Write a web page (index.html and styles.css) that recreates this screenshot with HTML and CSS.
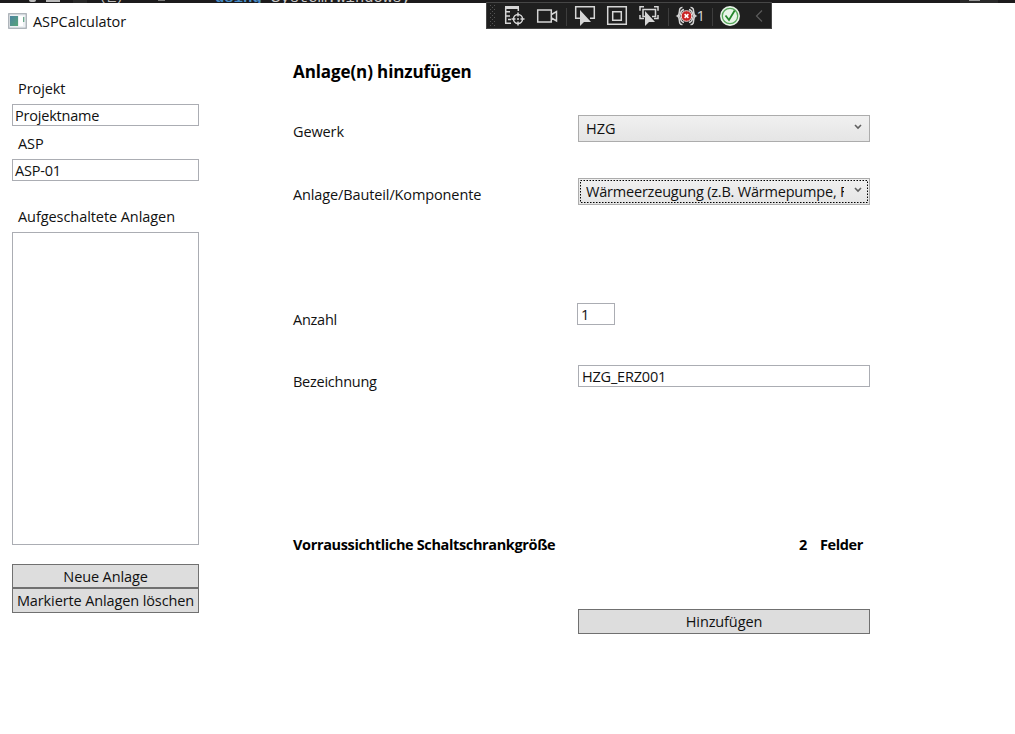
FILE: index.html
```html
<!DOCTYPE html>
<html lang="de">
<head>
<meta charset="utf-8">
<title>ASPCalculator</title>
<link rel="stylesheet" href="styles.css">
</head>
<body>
<div class="editor-strip">
  <i class="strip-dot"></i><i class="strip-bar"></i><i class="strip-sep"></i>
  <span class="strip-tab">(면)</span><i class="strip-caret"></i>
  <span class="code"><b class="keyword">using</b> System.Windows;</span>
  <i class="strip-panel"></i>
</div>
<header class="titlebar">
  <svg class="app-icon" width="19" height="16" viewBox="0 0 19 16">
    <defs><linearGradient id="pane" x2="1" y2="1"><stop offset="0" stop-color="#4b83a1"/><stop offset="1" stop-color="#58a578"/></linearGradient></defs>
    <rect x=".75" y=".75" width="17.5" height="14.5" fill="#eef1f4" stroke="#a2a9b0" stroke-width="1.2"/>
    <rect x="2" y="3" width="8" height="10" fill="url(#pane)"/>
    <rect x="11" y="3" width="4" height="10" fill="#fff"/>
    <path d="M15.7 4v5" stroke="#5ba080" stroke-width="1.2"/>
  </svg>
  <span class="title">ASPCalculator</span>
</header>
<div class="debug-toolbar">
  <svg width="286" height="27" viewBox="0 0 286 27" fill="none" stroke="#d6d6d6" stroke-width="1.5">
    <rect x=".5" y=".5" width="285" height="26" fill="#1f1f1f" stroke="#464646" stroke-width="1"/>
    <g stroke="#555" stroke-width="1" stroke-dasharray="1 3"><path d="M4.5 3v21M8.5 3v21"/><path d="M6.5 5v19"/></g>
    <path d="M19 5.500h14" stroke-width="3"/>
    <path d="M19.700 6v15.300M32.300 6v3M19 9.700h5M20 14h4M19 21.300h6M22 17.500h3"/>
    <circle cx="32" cy="17" r="4.500"/><path d="M32 10.500v4M32 19.500v4M25.500 17h4M34.500 17h4"/>
    <circle cx="32" cy="17" r="1" fill="#d6d6d6" stroke="none"/>
    <path d="M51.700 8h13.600v12H51.700zM65.500 12.500l5-3v9.500l-5-3"/>
    <path d="M80.500 6v18M182.500 6v18M226.500 6v18" stroke="#3d3d3d" stroke-width="1"/>
    <path d="M94 16.300h-4.300V4.700h18.600v11.600H104"/>
    <path d="M94 8v16l4-4 2.500 0h4.500z" fill="#d6d6d6" stroke="none"/>
    <path d="M121.700 4.700h18.600v17.600h-18.600zM126.700 9.700h8.600v8.600h-8.600z"/>
    <path d="M158 4.700h-4v4M154 13v3.500h4M168 4.700h4v4M172 13v3.500h-4M159 14.500h-2V7.500h12.500v7H166"/>
    <path d="M159 9v15l4-4h6z" fill="#d6d6d6" stroke="none"/>
    <path d="M196.500 5.500c-5-.5-1.500 7-5 8.500 3.500 1.500 0 9 5 8.500M204.500 5.500c5-.5 1.500 7 5 8.500-3.500 1.500 0 9-5 8.500" stroke-width="1.500"/>
    <path d="M198 7.500c-4 1-3 4-4.500 6.500 1.500 2.500.5 5.500 4.500 6.500M203 7.500c4 1 3 4 4.500 6.500-1.500 2.500-.5 5.500-4.500 6.500" stroke-width="1.400"/>
    <circle cx="200.500" cy="14" r="5.300" fill="#c92323" stroke="#f2dada" stroke-width="1"/>
    <path d="M198.600 12.100l3.800 3.800m0-3.800l-3.800 3.800" stroke="#fff" stroke-width="1.500"/>
    <circle cx="244" cy="14" r="9.200" fill="#e8f5e8" stroke="#e8f5e8"/>
    <circle cx="244" cy="14" r="7.700" stroke="#58a85c" stroke-width="1.300" fill="#e8f5e8"/>
    <path d="M239.500 13.500l3.500 4.500 5.700-9.500" stroke="#24852c" stroke-width="1.800"/>
    <path d="M276 8.500l-5.500 5.500 5.500 5.500" stroke="#5c5c5c" stroke-width="1.200"/>
    <text class="error-count" x="210.500" y="19">1</text>
  </svg>
</div>
<div class="workspace">
  <aside class="sidebar">
    <label class="caption">Projekt</label>
    <div class="textbox">Projektname</div>
    <label class="caption caption-asp">ASP</label>
    <div class="textbox">ASP-01</div>
    <label class="caption caption-list">Aufgeschaltete Anlagen</label>
    <div class="listbox"></div>
    <div class="button">Neue Anlage</div>
    <div class="button button-delete">Markierte Anlagen löschen</div>
  </aside>
  <main class="form">
    <h1>Anlage(n) hinzufügen</h1>
    <div class="row row-gewerk"><label>Gewerk</label>
      <div class="select"><span class="value value-short">HZG</span><svg class="chevron" width="8" height="6"><path d="M1 1l3 3 3-3"/></svg></div></div>
    <div class="row row-component"><label>Anlage/Bauteil/Komponente</label>
      <div class="select"><span class="value">Wärmeerzeugung (z.B. Wärmepumpe, Fernwärme)</span><svg class="chevron" width="8" height="6"><path d="M1 1l3 3 3-3"/></svg>
        <svg class="focus" width="290" height="25"><rect x="1.500" y="1.500" width="287" height="22"/></svg></div></div>
    <div class="row row-count"><label>Anzahl</label><div class="textbox count">1</div></div>
    <div class="row row-name"><label>Bezeichnung</label><div class="textbox name">HZG_ERZ001</div></div>
    <div class="summary"><span class="summary-label">Vorraussichtliche Schaltschrankgröße</span><span>2</span><span class="unit">Felder</span></div>
    <div class="button submit">Hinzufügen</div>
  </main>
</div>
</body>
</html>
```
FILE: styles.css
```css
* { box-sizing: border-box; }
body { margin: 0; width: 1015px; height: 734px; overflow: hidden; position: relative; background: #fff; color: #111; font: 14.5px/20px "Open Sans", "Noto Sans", sans-serif; letter-spacing: -0.12px; white-space: nowrap; }
.editor-strip { position: relative; height: 3px; overflow: hidden; background: #1c1b1c; }
.editor-strip > * { position: absolute; }
.strip-dot { left: 29px; top: -2px; width: 7px; height: 4px; border-radius: 3px; background: #bbb; }
.strip-bar { left: 46px; top: 0; width: 14px; height: 2px; background: #bbb; }
.strip-sep { left: 73px; top: 0; width: 14px; height: 3px; background: #292929; }
.strip-tab { left: 99px; top: -11px; font: 13px/15px "Liberation Mono", "Noto Sans CJK KR", monospace; letter-spacing: -1.5px; color: #bbb; }
.strip-caret { left: 158px; top: 0; width: 7px; height: 1px; background: #777; }
.strip-panel { left: 960px; top: 0; width: 38px; height: 3px; background: linear-gradient(90deg, #292929 9px, transparent 9px 20px, #292929 20px), linear-gradient(#999 1px, #292929 1px); }
.code { left: 215px; top: -11px; font: 15.55px/18px "Liberation Mono", monospace; letter-spacing: 0; color: #c8c8c8; }
.keyword { color: #478bc5; }
.titlebar { display: flex; height: 49px; padding: 9px 0 0 8px; gap: 6px; }
.app-icon { margin-top: 1px; }
.title { letter-spacing: -0.08px; }
.debug-toolbar { position: absolute; left: 486px; top: 2px; width: 286px; height: 27px; }
.debug-toolbar svg { display: block; }
.error-count { font: 15px "Open Sans", sans-serif; fill: #d6d6d6; stroke: none; }
.workspace { display: flex; padding-left: 12px; }
.sidebar { display: flex; flex-direction: column; width: 187px; margin-right: 94px; padding-top: 27px; }
.caption { height: 25px; padding-left: 6px; letter-spacing: -0.07px; }
.textbox { height: 22px; padding: 1px 0 0 2px; border: 1px solid #abadb3; background: #fff; letter-spacing: -0.2px; }
.caption-asp { height: 33px; padding-top: 8px; }
.caption-list { height: 51px; padding-top: 26px; }
.listbox { height: 313px; border: 1px solid #abadb3; margin-bottom: 19px; }
.button { height: 25px; padding-top: 2px; border: 1px solid #707070; background: #ddd; text-align: center; }
.sidebar .button { height: 24px; }
.sidebar .button-delete { height: 25px; }
.form { width: 577px; padding-top: 8px; }
h1 { margin: 0; height: 55px; font-size: 17px; line-height: 24px; letter-spacing: -0.1px; color: #000; }
.row { display: grid; grid-template-columns: 285px 292px; height: 63px; align-items: start; }
.row label { padding-top: 7px; }
.select { position: relative; display: flex; align-items: center; height: 27px; padding: 0 7px; border: 1px solid #acacac; background: linear-gradient(#f0f0f0, #e5e5e5); }
.value { flex: none; width: 258px; overflow: hidden; letter-spacing: -0.2px; }
.value-short { padding-top: 1px; letter-spacing: 0; }
.chevron { margin-left: 10px; margin-top: -3px; fill: none; stroke: #606060; stroke-width: 1.6; }
.focus { position: absolute; left: 0; top: 0; fill: none; stroke: #000; stroke-width: 1; stroke-dasharray: 1.5 1.5; }
.row-component { height: 125px; }
.row-count { height: 62px; }
.row-count label, .row-name label { letter-spacing: -0.25px; }
.count { width: 38px; margin-left: -1px; padding-left: 3px; }
.row-name { height: 170px; }
.name { padding-left: 3px; }
.summary { display: flex; height: 74px; color: #000; font-weight: 700; letter-spacing: -0.36px; }
.summary-label { width: 506px; }
.unit { margin-left: 13px; }
.submit { width: 292px; margin-left: 285px; }
```
